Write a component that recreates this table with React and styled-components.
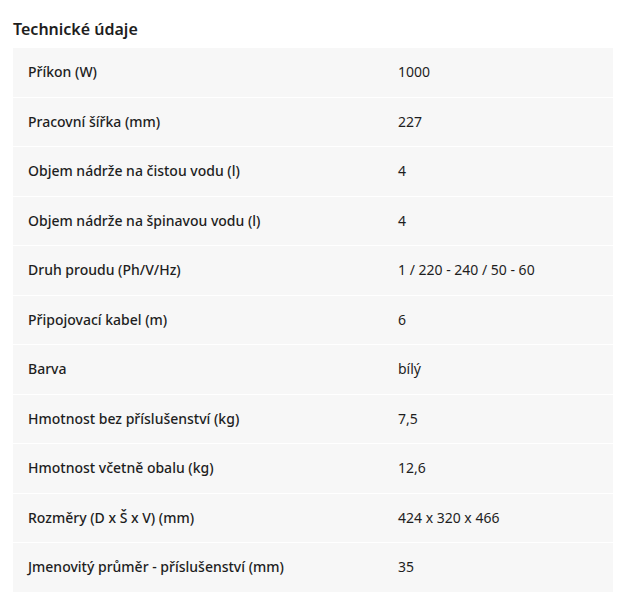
import React from 'react'
import styled, { createGlobalStyle } from 'styled-components';

const GlobalStyle = createGlobalStyle`
    body {
        margin: 0;
        background: #fff;
        font-family: 'Noto Sans', 'DejaVu Sans', sans-serif;
        color: #222;
    }
`;

const specs = [
    ['Příkon (W)', '1000'],
    ['Pracovní šířka (mm)', '227'],
    ['Objem nádrže na čistou vodu (l)', '4'],
    ['Objem nádrže na špinavou vodu (l)', '4'],
    ['Druh proudu (Ph/V/Hz)', '1 / 220 - 240 / 50 - 60'],
    ['Připojovací kabel (m)', '6'],
    ['Barva', 'bílý'],
    ['Hmotnost bez příslušenství (kg)', '7,5'],
    ['Hmotnost včetně obalu (kg)', '12,6'],
    ['Rozměry (D x Š x V) (mm)', '424 x 320 x 466'],
    ['Jmenovitý průměr - příslušenství (mm)', '35'],
];

const Section = styled.section`
    padding: 19px 9px 0 13px;
`;

const Title = styled.h2`
    margin: 0 0 9px;
    font-size: 16px;
    line-height: 20px;
    font-weight: 600;
    color: #1e1e1e;
`;

const Table = styled.div`
    display: flex;
    flex-direction: column;
`;

const Row = styled.div`
    display: grid;
    grid-template-columns: 370px 1fr;
    align-items: center;
    height: 48.5px;
    background: #f7f7f7;
    border-bottom: 1px solid #fff;

    &:last-child {
        border-bottom: none;
    }
`;

const Cell = styled.div`
    padding: 0 15px;
    font-size: 14px;
    line-height: 18px;
    font-weight: ${p => (p.$label ? 500 : 400)};
    color: #1e1e1e;
`;

export default function App() {
    return (
        <>
            <GlobalStyle />
            <Section>
                <Title>Technické údaje</Title>
                <Table>
                    {specs.map(([label, value]) => (
                        <Row key={label}>
                            <Cell $label>{label}</Cell>
                            <Cell>{value}</Cell>
                        </Row>
                    ))}
                </Table>
            </Section>
        </>
    )
}
